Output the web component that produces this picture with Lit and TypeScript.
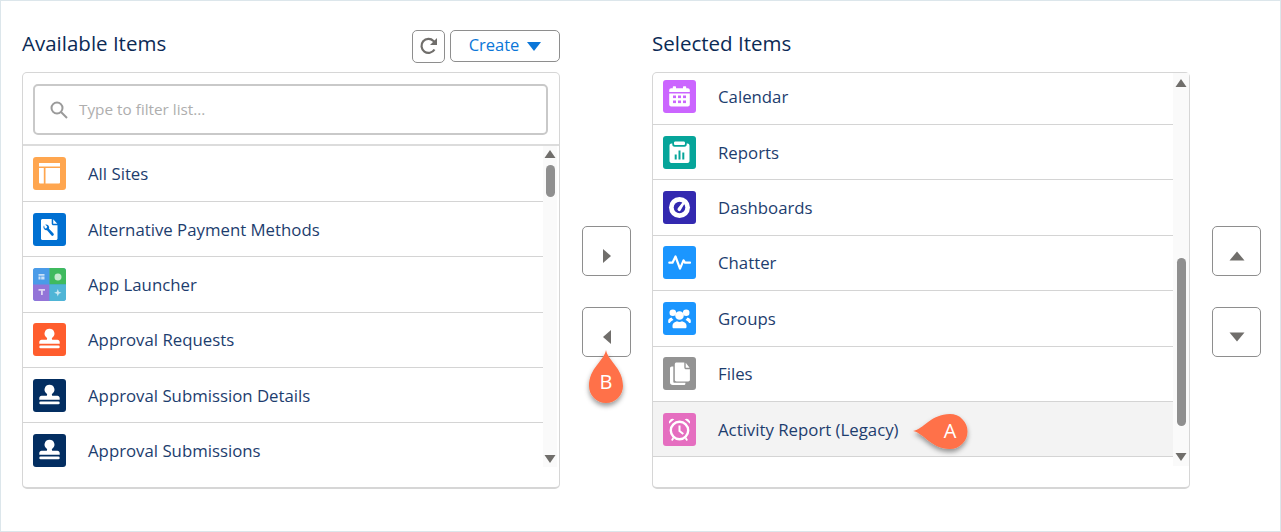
import { LitElement, html, css, svg } from "lit";
import { customElement } from "lit/decorators.js";

const stamp = svg`<path fill="#fff" d="M16.500 5.800a4.900 4.900 0 0 0-3 8.800c.9.800.8 1.700.2 2.200H8.600c-1.300 0-2.300 1-2.300 2.300v1.700h20.400v-1.700c0-1.300-1-2.300-2.300-2.300h-5.100c-.6-.5-.7-1.400.2-2.200a4.900 4.900 0 0 0-3-8.800z"/><rect x="6.300" y="22.600" width="20.400" height="2.600" rx="1.300" fill="#fff"/>`;

const icons: Record<string, unknown> = {
  sites: svg`<path fill="#fff" d="M6 6h21v3.500H6zM6 11h4.800v15.500H7a1 1 0 0 1-1-1zM12.500 11H27v14.500a1 1 0 0 1-1 1H12.500z"/>`,
  pay: svg`<path fill="#fff" d="M9.500 6h9.200v4.500c0 1 .8 1.800 1.800 1.800h4v13.200c0 .8-.7 1.500-1.500 1.500H9.500c-.8 0-1.500-.7-1.500-1.500v-18c0-.8.7-1.500 1.500-1.500zM20.200 6.200l4.100 4.600h-4.100z"/><path fill="#0070d2" d="M11 12.300a3.200 3.200 0 0 0 3 5l4.300 5a1.400 1.400 0 0 0 2.200-1.800l-4.500-4.800a3.200 3.200 0 0 0-3.800-4.200l2 2-.7 1.800-1.700.3z"/>`,
  launcher: svg`<rect width="16.500" height="16.500" fill="#4a9be8"/><rect x="16.500" width="16.500" height="16.500" fill="#3fba5e"/><rect y="16.500" width="16.500" height="16.500" fill="#9374d8"/><rect x="16.500" y="16.500" width="16.500" height="16.500" fill="#4fb5d6"/><path fill="#fff" opacity=".7" d="M5.500 6h6v1.800h-6zM5.500 8.500h2v3h-2zM8.200 8.500h3.300v3H8.200zM5.500 21h6.500v1.800H9.800v4.200H8v-4.200H5.500zM25 5.500a3.500 3.500 0 1 1-.01 7 3.500 3.500 0 0 1 .01-7zM24.800 21l1 2.700 2.700 1-2.700 1-1 2.700-1-2.700-2.700-1 2.700-1z"/>`,
  stamp,
  calendar: svg`<path fill="#fff" d="M10.500 6.300h1.800c.4 0 .7.300.7.700v1.200h7V7c0-.4.300-.7.700-.7h1.800c.4 0 .7.300.7.700v1.200h1.600c1.100 0 2 .9 2 2V12H6.200v-1.800c0-1.100.9-2 2-2h1.600V7c0-.4.300-.7.700-.7zM6.200 13.500h20.600v11c0 1.100-.9 2-2 2H8.200c-1.100 0-2-.9-2-2z"/><g fill="#cb65ff"><rect x="10" y="15.500" width="3" height="2.600"/><rect x="15" y="15.500" width="3" height="2.600"/><rect x="20" y="15.500" width="3" height="2.600"/><rect x="10" y="20.500" width="3" height="2.600"/><rect x="15" y="20.500" width="3" height="2.600"/><rect x="20" y="20.500" width="3" height="2.600"/></g>`,
  reports: svg`<path fill="#fff" d="M12.300 5.500h8.400c.7 0 1.300.6 1.300 1.300v1c0 .7-.6 1.300-1.300 1.300h-8.400c-.7 0-1.300-.6-1.300-1.300v-1c0-.7.600-1.300 1.300-1.300zM9.300 7.500v1c0 1.300 1 2.300 2.300 2.300h9.800c1.300 0 2.300-1 2.300-2.300v-1h.8c1.100 0 2 .9 2 2v15.500c0 1.100-.9 2-2 2H8.500c-1.100 0-2-.9-2-2V9.500c0-1.100.9-2 2-2z"/><g fill="#06a59a"><rect x="11.700" y="18.500" width="2" height="5"/><rect x="15.500" y="14.500" width="2" height="9"/><rect x="19.300" y="16.500" width="2" height="7"/></g>`,
  dash: svg`<circle cx="16.500" cy="16.500" r="10.500" fill="#fff"/><circle cx="16.500" cy="16.500" r="5.800" fill="#3329b0"/><path d="M14.800 17.300l6.200-7.800 1.700 1.100-5 8.700a1.700 1.700 0 0 1-2.900-2z" fill="#fff"/>`,
  chatter: svg`<path fill="none" stroke="#fff" stroke-width="2.200" stroke-linecap="round" stroke-linejoin="round" d="M6.300 16.700h3.200l3-6.200 4.500 12.200 3.500-8.400 1.500 2.400h5"/>`,
  groups: svg`<g fill="#fff"><circle cx="16.500" cy="13.500" r="4.300"/><path d="M9.500 25v-1.500c0-2.300 2.200-3.500 4.500-4.300 1.500 1 3.500 1 5 0 2.300.8 4.500 2 4.500 4.300V25c0 .8-.6 1.300-1.300 1.300H10.800c-.7 0-1.300-.5-1.300-1.300z"/><circle cx="9.800" cy="10.800" r="3.300"/><circle cx="23.200" cy="10.800" r="3.300"/><path d="M5.200 20v-1.300c0-1.700 1.600-2.500 3.300-3.200.5.900 1.200 1.800 2 2.400-1.600.7-3 1.500-3.600 3.100H6.200c-.6 0-1-.4-1-1zM27.800 20v-1.300c0-1.700-1.600-2.500-3.300-3.200-.5.900-1.200 1.800-2 2.400 1.600.7 3 1.500 3.600 3.100h.7c.6 0 1-.4 1-1z"/></g>`,
  files: svg`<path fill="#fff" d="M13.500 5.500h7.800v5c0 1 .8 1.800 1.800 1.800h3.800v10.500c0 1-.8 1.700-1.700 1.700H13.500c-1 0-1.700-.8-1.700-1.700V7.200c0-1 .8-1.700 1.700-1.700zM22.700 5.700l3.900 5.100h-3.900z"/><path fill="#fff" d="M8.800 9.500h1.500v15.200c0 .6.500 1.100 1.100 1.100h11v.6c0 1-.8 1.600-1.600 1.600H9.800C8 28 7 27 7 25.300V11.300c0-1 .8-1.800 1.800-1.800z"/>`,
  activity: svg`<circle cx="16.500" cy="17.500" r="8.700" fill="none" stroke="#fff" stroke-width="2.400"/><path d="M16.500 12.500v5.500l3.800 3" fill="none" stroke="#fff" stroke-width="2"/><path fill="#fff" d="M6 10.700a3.800 3.800 0 0 1 5.300-4.500zM27 10.700a3.800 3.800 0 0 0-5.300-4.500zM9.500 24.500l1.700 1.300-1.800 2.200-1.300-1zM23.500 24.500l-1.700 1.300 1.800 2.200 1.300-1z"/>`,
};

type Item = { label: string; icon: string; color: string; active?: boolean };

const AVAILABLE: Item[] = [
  { label: "All Sites", icon: "sites", color: "#ffa64f" },
  { label: "Alternative Payment Methods", icon: "pay", color: "#0070d2" },
  { label: "App Launcher", icon: "launcher", color: "#4a9be8" },
  { label: "Approval Requests", icon: "stamp", color: "#ff5d2d" },
  { label: "Approval Submission Details", icon: "stamp", color: "#032e61" },
  { label: "Approval Submissions", icon: "stamp", color: "#032e61" },
];
const SELECTED: Item[] = [
  { label: "Calendar", icon: "calendar", color: "#cb65ff" },
  { label: "Reports", icon: "reports", color: "#06a59a" },
  { label: "Dashboards", icon: "dash", color: "#3329b0" },
  { label: "Chatter", icon: "chatter", color: "#1b96ff" },
  { label: "Groups", icon: "groups", color: "#1b96ff" },
  { label: "Files", icon: "files", color: "#939393" },
  { label: "Activity Report (Legacy)", icon: "activity", color: "#e56ec0", active: true },
];

const tri = (points: string, fill = "#706e6b") =>
  html`<svg class="tri" width="16" height="16" viewBox="0 0 16 16"><polygon points=${points} fill=${fill}></polygon></svg>`;

@customElement("app-root")
export class AppRoot extends LitElement {
  static styles = css`
    :host {
      display: block;
      position: relative;
      width: 1281px;
      height: 532px;
      box-sizing: border-box;
      border: 1px solid #dce6eb;
      background: #fff;
      font-family: "Open Sans", "Noto Sans", sans-serif;
      color: #1d3d6e;
      overflow: hidden;
    }
    .main { display: flex; padding: 28px 0 0 21px; }
    .col { width: 538px; flex: none; }
    .head { display: flex; align-items: center; height: 34px; margin-bottom: 9px; }
    h2 { margin: 0; flex: 1; font-size: 20.500px; font-weight: 400; color: #0b2a55; line-height: 30px; position: relative; top: -3px; }
    .btn {
      box-sizing: border-box;
      border: 1px solid #8e8e8e;
      border-radius: 5px;
      background: #fff;
      display: flex;
      align-items: center;
      justify-content: center;
      padding: 0;
    }
    .refresh { width: 33px; height: 33px; }
    .create { width: 110px; height: 32px; margin-left: 5px; color: #0b76d8; font: 400 16.500px "Open Sans", sans-serif; gap: 8px; }
    .create span { margin-top: -3px; }
    .panel {
      box-sizing: border-box;
      height: 417px;
      border: 1px solid #d6d6d6;
      border-bottom-width: 2px;
      border-radius: 5px;
      display: flex;
      flex-direction: column;
    }
    .search-wrap { padding: 11px 11px 9px 10px; }
    .search {
      box-sizing: border-box;
      height: 51px;
      border: 2px solid #c9c9c9;
      border-radius: 5px;
      display: flex;
      align-items: center;
      gap: 11px;
      padding-left: 15px;
      color: #aeaeae;
      font-size: 15.300px;
    }
    .search span { margin-top: -2px; }
    .body { display: flex; height: 321px; border-top: 2px solid #dcdcdc; }
    .body.right { height: 393px; border-top: none; }
    .clip { flex: 1; min-width: 0; overflow: hidden; }
    .list { list-style: none; margin: 0.500px 0 0; padding: 0; }
    .right .list { margin-top: -3.400px; }
    .row {
      box-sizing: border-box;
      height: 55.400px;
      display: flex;
      align-items: center;
      gap: 22px;
      padding-left: 10px;
      border-bottom: 1px solid #d4d4d4;
      font-size: 16.800px;
    }
    .row.active { background: #f3f3f3; }
    .ic { width: 33px; height: 33px; flex: none; border-radius: 3px; display: block; }
    .bar {
      flex: none;
      width: 14px;
      margin-right: 2px;
      background: #fafafa;
      display: flex;
      flex-direction: column;
      align-items: center;
    }
    .right .bar { width: 16px; margin-right: 0; }
    .tri { display: block; flex: none; }
    .thumb { width: 9px; background: #8f8f8f; border-radius: 5px; margin-top: 3px; }
    .left-thumb { height: 32px; }
    .right-thumb { height: 168px; margin-top: 169px; }
    .grow { flex: 1; }
    .mid { flex: none; width: 92px; padding: 197px 0 0 22px; box-sizing: border-box; }
    .side { flex: none; padding: 197px 0 0 22px; }
    .move { width: 49px; height: 49.500px; padding-top: 10px; }
    .move + .move { margin-top: 31.500px; height: 50px; }
    .pin { position: absolute; overflow: visible; }
    .pin-a { left: 905px; top: 405px; }
    .pin-b { left: 580px; top: 343px; }
    .pin text { font: 400 20px "Open Sans", sans-serif; fill: #fff; text-anchor: middle; }
  `;

  private rows(items: Item[]) {
    return html`<ul class="list">
      ${items.map(
        (i) => html`<li class="row ${i.active ? "active" : ""}">
          <svg class="ic" viewBox="0 0 33 33" style="background:${i.color}">${icons[i.icon]}</svg>
          <span>${i.label}</span>
        </li>`
      )}
    </ul>`;
  }

  render() {
    return html`
      <div class="main">
        <section class="col">
          <div class="head">
            <h2>Available Items</h2>
            <button class="btn refresh" aria-label="Refresh">
              <svg width="20" height="20" viewBox="0 0 20 20" fill="none">
                <path d="M15.500 13.500A7 7 0 1 1 14.500 5L16.500 7" stroke="#706e6b" stroke-width="2.200"></path>
                <polygon points="18,2 18,9 11,9" fill="#706e6b"></polygon>
              </svg>
            </button>
            <button class="btn create"><span>Create</span>
              <svg width="14" height="9" viewBox="0 0 14 9"><polygon points="0,0 14,0 7,9" fill="#0b76d8"></polygon></svg>
            </button>
          </div>
          <div class="panel">
            <div class="search-wrap">
              <div class="search">
                <svg width="18" height="18" viewBox="0 0 18 18" fill="none" stroke="#9a9a9a" stroke-width="2"><circle cx="7" cy="7" r="5.500"></circle><path d="M11 11l6 6"></path></svg>
                <span>Type to filter list...</span>
              </div>
            </div>
            <div class="body">
              <div class="clip">${this.rows(AVAILABLE)}</div>
              <div class="bar">
                ${tri("2.500,12 13.500,12 8,4")}
                <div class="thumb left-thumb"></div>
                <div class="grow"></div>
                ${tri("2.500,4 13.500,4 8,12")}
              </div>
            </div>
          </div>
        </section>
        <div class="mid">
          <button class="btn move" aria-label="Add">${tri("4,1 12,8 4,15")}</button>
          <button class="btn move" aria-label="Remove">${tri("12,1 4,8 12,15")}</button>
        </div>
        <section class="col">
          <div class="head"><h2>Selected Items</h2></div>
          <div class="panel">
            <div class="body right">
              <div class="clip">${this.rows(SELECTED)}</div>
              <div class="bar">
                ${tri("2.500,14 13.500,14 8,6")}
                <div class="thumb right-thumb"></div>
                <div class="grow"></div>
                ${tri("2.500,3 13.500,3 8,11")}
              </div>
            </div>
          </div>
        </section>
        <div class="side">
          <button class="btn move" aria-label="Up">${tri("0.500,12.500 15.500,12.500 8,3.500")}</button>
          <button class="btn move" aria-label="Down">${tri("0.500,3.500 15.500,3.500 8,12.500")}</button>
        </div>
      </div>
      <svg class="pin pin-a" width="64" height="50" viewBox="0 0 64 50">
        <defs><filter id="s" x="-30%" y="-30%" width="160%" height="170%"><feDropShadow dx="0" dy="3" stdDeviation="2.500" flood-color="#000" flood-opacity=".4"></feDropShadow></filter></defs>
        <path d="M7 25C18 23 25 8 44 8a17.500 17.500 0 0 1 0 35C25 43 18 27 7 25z" fill="#ff7148" filter="url(#s)"></path>
        <text x="44" y="32">A</text>
      </svg>
      <svg class="pin pin-b" width="50" height="64" viewBox="0 0 50 64">
        <path d="M25 6C27 17 42 24 42 42a17 17 0 0 1-34 0C8 24 23 17 25 6z" fill="#ff7148" filter="url(#s)"></path>
        <text x="25" y="45">B</text>
      </svg>
    `;
  }
}
